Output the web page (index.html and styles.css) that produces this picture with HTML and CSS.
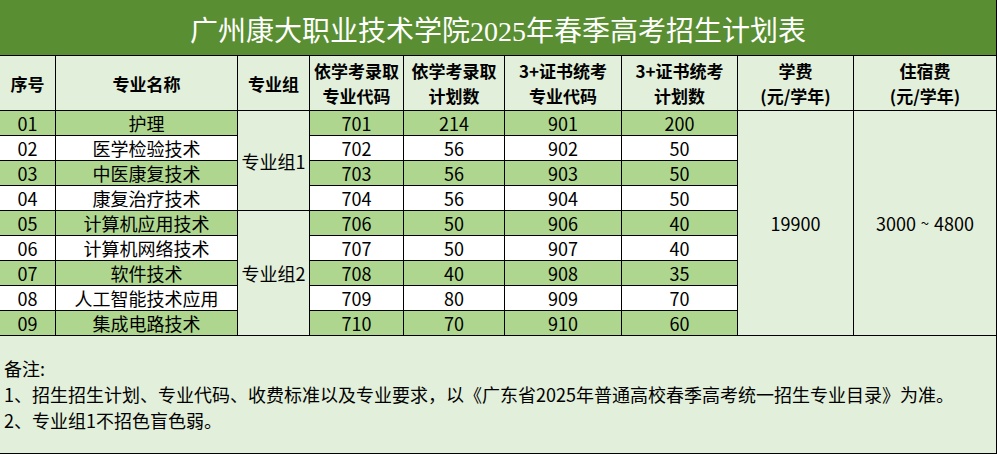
FILE: index.html
```html
<!DOCTYPE html>
<html lang="zh-CN">
<head>
<meta charset="utf-8">
<title>广州康大职业技术学院2025年春季高考招生计划表</title>
<link rel="stylesheet" href="styles.css">
</head>
<body>
<div class="sheet">
  <div class="title">广州康大职业技术学院2025年春季高考招生计划表</div>

  <div class="hd">序号</div>
  <div class="hd">专业名称</div>
  <div class="hd">专业组</div>
  <div class="hd">依学考录取<br>专业代码</div>
  <div class="hd">依学考录取<br>计划数</div>
  <div class="hd">3+证书统考<br>专业代码</div>
  <div class="hd">3+证书统考<br>计划数</div>
  <div class="hd">学费<br>(元/学年)</div>
  <div class="hd">住宿费<br>(元/学年)</div>

  <div class="c dk">01</div><div class="c dk">护理</div>
  <div class="c grp g1">专业组1</div>
  <div class="c dk">701</div><div class="c dk">214</div><div class="c dk">901</div><div class="c dk">200</div>
  <div class="c fee f1">19900</div>
  <div class="c fee f2">3000<span class="tilde">~</span>4800</div>

  <div class="c">02</div><div class="c">医学检验技术</div>
  <div class="c">702</div><div class="c">56</div><div class="c">902</div><div class="c">50</div>

  <div class="c dk">03</div><div class="c dk">中医康复技术</div>
  <div class="c dk">703</div><div class="c dk">56</div><div class="c dk">903</div><div class="c dk">50</div>

  <div class="c">04</div><div class="c">康复治疗技术</div>
  <div class="c">704</div><div class="c">56</div><div class="c">904</div><div class="c">50</div>

  <div class="c dk">05</div><div class="c dk">计算机应用技术</div>
  <div class="c grp g2">专业组2</div>
  <div class="c dk">706</div><div class="c dk">50</div><div class="c dk">906</div><div class="c dk">40</div>

  <div class="c">06</div><div class="c">计算机网络技术</div>
  <div class="c">707</div><div class="c">50</div><div class="c">907</div><div class="c">40</div>

  <div class="c dk">07</div><div class="c dk">软件技术</div>
  <div class="c dk">708</div><div class="c dk">40</div><div class="c dk">908</div><div class="c dk">35</div>

  <div class="c">08</div><div class="c">人工智能技术应用</div>
  <div class="c">709</div><div class="c">80</div><div class="c">909</div><div class="c">70</div>

  <div class="c dk">09</div><div class="c dk">集成电路技术</div>
  <div class="c dk">710</div><div class="c dk">70</div><div class="c dk">910</div><div class="c dk">60</div>

  <div class="note">
    <p>备注:</p>
    <p>1、招生招生计划、专业代码、收费标准以及专业要求，以《广东省2025年普通高校春季高考统一招生专业目录》为准。</p>
    <p>2、专业组1不招色盲色弱。</p>
  </div>
</div>
</body>
</html>
```

FILE: styles.css
```css
* { box-sizing: border-box; }
html, body { margin: 0; padding: 0; background: #ffffff; }

.sheet {
  display: grid;
  grid-template-columns: 55px 181px 71px 93px 100px 116px 115px 115px 142px;
  grid-template-rows: 55px 54px repeat(9, 24px) 117px;
  gap: 1px;
  padding: 0 1px 1px 0;
  width: 997px;
  height: 454px;
  background: #000000;
  font-family: "Noto Sans CJK SC", "Noto Sans", sans-serif;
  color: #000000;
}

.title {
  grid-column: 1 / -1;
  background: #5a8e32;
  color: #ffffff;
  font-family: "Liberation Serif", "Noto Sans CJK SC", serif;
  font-size: 28px;
  display: flex;
  align-items: center;
  justify-content: center;
  padding-top: 2px;
}

.hd {
  background: #e2efda;
  font-weight: 700;
  font-size: 17px;
  line-height: 25px;
  display: flex;
  align-items: center;
  justify-content: center;
  text-align: center;
}

.c {
  background: #ffffff;
  font-size: 18px;
  line-height: 24px;
  display: flex;
  align-items: center;
  justify-content: center;
  white-space: nowrap;
}

.c.dk { background: #aed68e; }

.grp, .fee { background: #e2efda; }

.tilde {
  display: inline-block;
  width: 18px;
  text-align: center;
  font-size: 15px;
}

.g1 { grid-column: 3; grid-row: 3 / span 4; }
.g2 { grid-column: 3; grid-row: 7 / span 5; }
.f1 { grid-column: 8; grid-row: 3 / span 9; }
.f2 { grid-column: 9; grid-row: 3 / span 9; }

.note {
  grid-column: 1 / -1;
  background: #e2efda;
  display: flex;
  flex-direction: column;
  justify-content: center;
  padding-left: 4px;
  padding-bottom: 2px;
  font-size: 18px;
  line-height: 26px;
}
.note p { margin: 0; white-space: nowrap; }
```
